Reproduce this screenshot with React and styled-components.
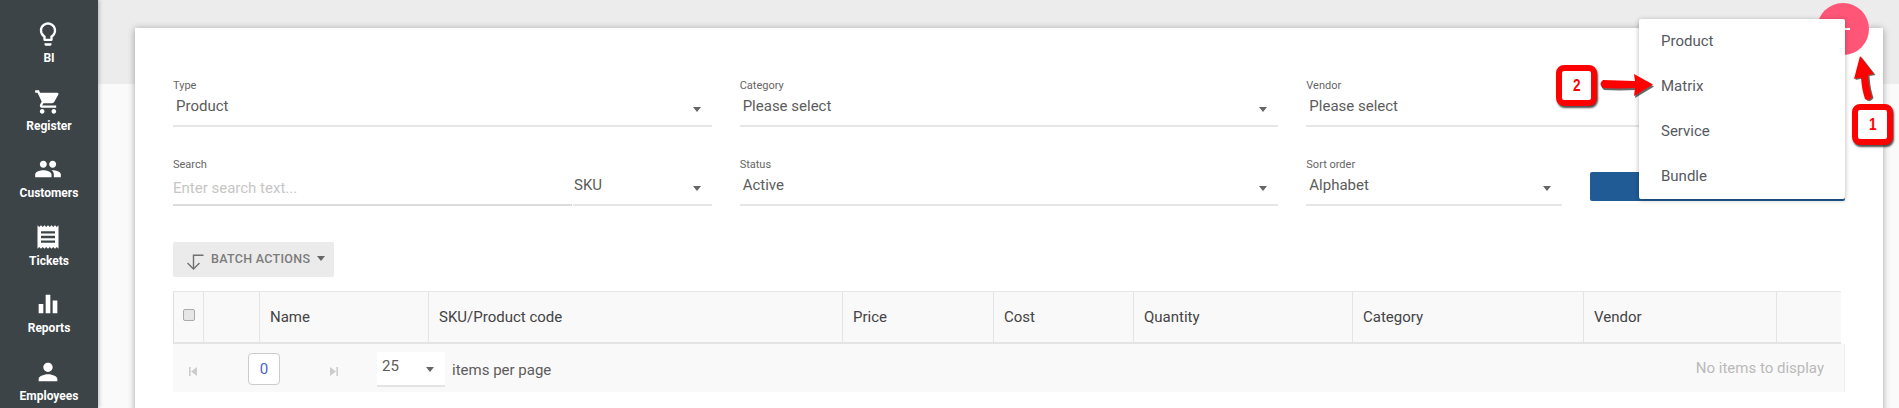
import React from 'react'
import styled, { createGlobalStyle } from 'styled-components'
import { MdOutlineLightbulb, MdShoppingCart, MdPeople, MdReceipt, MdEqualizer, MdPerson } from 'react-icons/md'

const navItems = [
  { label: 'BI', Icon: MdOutlineLightbulb },
  { label: 'Register', Icon: MdShoppingCart },
  { label: 'Customers', Icon: MdPeople },
  { label: 'Tickets', Icon: MdReceipt },
  { label: 'Reports', Icon: MdEqualizer },
  { label: 'Employees', Icon: MdPerson },
]

const columns = [
  { width: 30 },
  { width: 56 },
  { width: 169, label: 'Name' },
  { width: 414, label: 'SKU/Product code' },
  { width: 151, label: 'Price' },
  { width: 140, label: 'Cost' },
  { width: 219, label: 'Quantity' },
  { width: 231, label: 'Category' },
  { width: 193, label: 'Vendor' },
  { width: 65 },
]

const arrowTwoPath = 'M4 7C14 7 24 8 36 8L35 1L54 11.5L35 23L36 15C25 15.5 14 15.5 4 15Q-1 11 4 7Z'
const arrowOnePath = 'M19 42C17 36 15.5 29 15 20L21 19L7 1L1 24L8 22.5C8.5 31 10 38 12 44Q16 47 19 42Z'

function Field({ label, value }) {
  return (
    <FieldBox>
      <FieldLabel>{label}</FieldLabel>
      <FieldLine>
        <FieldValue>{value}</FieldValue>
        <Caret />
      </FieldLine>
    </FieldBox>
  )
}

function App() {
  return (
    <>
      <GlobalStyle />
      <Page>
        <Sidebar>
          {navItems.map(({ label, Icon }) => (
            <NavItem key={label}>
              <Icon size={28} />
              <NavLabel>{label}</NavLabel>
            </NavItem>
          ))}
        </Sidebar>
        <Main>
          <Card>
            <FilterGrid>
              <Field label="Type" value="Product" />
              <Field label="Category" value="Please select" />
              <Field label="Vendor" value="Please select" />
              <FieldBox>
                <FieldLabel>Search</FieldLabel>
                <SearchRow>
                  <SearchInput>Enter search text...</SearchInput>
                  <SkuSelect>
                    <SkuText>SKU</SkuText>
                    <Caret />
                  </SkuSelect>
                </SearchRow>
              </FieldBox>
              <Field label="Status" value="Active" />
              <SplitCell>
                <Field label="Sort order" value="Alphabet" />
                <SearchButton />
              </SplitCell>
            </FilterGrid>

            <BatchButton>
              <svg width="18" height="16" viewBox="0 0 18 16" fill="none" stroke="#6f6f6f" strokeWidth="1.4">
                <path d="M17.5 1.2H7.5V14" />
                <path d="M1.5 9L7.5 15L13.5 9" />
              </svg>
              <BatchText>BATCH ACTIONS</BatchText>
              <BatchCaret />
            </BatchButton>

            <TableHead>
              {columns.map((col, i) => (
                <HeadCell key={i} $width={col.width}>
                  {i === 0 ? <CheckBox /> : col.label}
                </HeadCell>
              ))}
            </TableHead>
            <TableFooter>
              <PagerIcon>
                <svg width="8" height="9" viewBox="0 0 8 9" fill="#ccc"><path d="M0 0h1.6v9H0zM8 0v9L2 4.5z" /></svg>
              </PagerIcon>
              <PageBox>0</PageBox>
              <PagerIcon>
                <svg width="8" height="9" viewBox="0 0 8 9" fill="#ccc"><path d="M6.4 0H8v9H6.4zM0 0v9l6-4.5z" /></svg>
              </PagerIcon>
              <PageSize>
                <span>25</span>
                <Caret />
              </PageSize>
              <PerPage>items per page</PerPage>
              <NoItems>No items to display</NoItems>
            </TableFooter>
          </Card>
        </Main>

        <Fab><FabPlus /></Fab>
        <Menu>
          <MenuItem>Product</MenuItem>
          <MenuItem>Matrix</MenuItem>
          <MenuItem>Service</MenuItem>
          <MenuItem>Bundle</MenuItem>
        </Menu>

        <Badge $left={1556} $top={65}><BadgeDigit>2</BadgeDigit></Badge>
        <Badge $left={1852} $top={104}><BadgeDigit>1</BadgeDigit></Badge>
        <ArrowTwo viewBox="0 0 58 26" width="58" height="26">
          <path d={arrowTwoPath} fill="#000" opacity=".6" transform="translate(1 2)" />
          <path d={arrowTwoPath} fill="#f00" />
        </ArrowTwo>
        <ArrowOne viewBox="0 0 24 48" width="24" height="48">
          <path d={arrowOnePath} fill="#000" opacity=".6" transform="translate(1.5 1)" />
          <path d={arrowOnePath} fill="#f00" />
        </ArrowOne>
      </Page>
    </>
  )
}

export default App

const GlobalStyle = createGlobalStyle`
    html, body {
        margin: 0;
        height: 100%;
        overflow: hidden;
        background: #fafafa;
    }
    body {
        font-family: Roboto, "Liberation Sans", sans-serif;
    }
    #root {
        height: 100%;
    }
`;
const Page = styled.div`
    position: relative;
    display: flex;
    width: 1899px;
    height: 408px;
    overflow: hidden;
`;
const Sidebar = styled.nav`
    flex: 0 0 98px;
    box-sizing: border-box;
    padding-top: 20px;
    background: #3c4448;
    box-shadow: 1px 0 4px rgba(0, 0, 0, 0.25);
    color: #fff;
    z-index: 1;
`;
const NavItem = styled.div`
    display: flex;
    flex-direction: column;
    align-items: center;
    height: 67.5px;
    svg {
        margin-left: -2px;
    }
`;
const NavLabel = styled.div`
    margin-top: 2px;
    font-size: 12px;
    font-weight: 700;
    line-height: 16px;
`;
const Main = styled.main`
    flex: 1;
    box-sizing: border-box;
    padding: 28px 16px 0 37px;
    background: linear-gradient(#ececec 84px, #fafafa 84px);
`;
const Card = styled.section`
    box-sizing: border-box;
    height: 420px;
    padding: 52px 38px 0;
    background: #fff;
    box-shadow: 0 1px 7px rgba(0, 0, 0, 0.35);
`;
const FilterGrid = styled.div`
    display: grid;
    grid-template-columns: repeat(3, 1fr);
    column-gap: 28px;
    row-gap: 32px;
`;
const SplitCell = styled.div`
    display: grid;
    grid-template-columns: repeat(2, 1fr);
    column-gap: 28px;
`;
const FieldBox = styled.div`
    display: flex;
    flex-direction: column;
    height: 47px;
`;
const FieldLabel = styled.label`
    height: 14px;
    font-size: 11px;
    line-height: 12px;
    color: #666;
`;
const FieldLine = styled.div`
    flex: 1;
    display: flex;
    align-items: center;
    justify-content: space-between;
    padding: 0 11px 7px 3px;
    border-bottom: 2px solid #e6e6e6;
`;
const FieldValue = styled.span`
    font-size: 15px;
    color: #5c5c5c;
`;
const Caret = styled.i`
    display: block;
    flex: none;
    margin-top: 7px;
    width: 0;
    height: 0;
    border-left: 4.5px solid transparent;
    border-right: 4.5px solid transparent;
    border-top: 5px solid #666;
`;
const BatchCaret = styled(Caret)`
    margin: -6px 0 0 -1px;
`;
const SearchRow = styled.div`
    flex: 1;
    display: flex;
`;
const SearchInput = styled.div`
    flex: 0 0 399px;
    display: flex;
    align-items: center;
    padding-bottom: 2px;
    box-sizing: border-box;
    font-size: 15px;
    color: #c6c6c6;
    border-bottom: 2px solid #dcdcdc;
`;
const SkuSelect = styled.div`
    flex: 1;
    display: flex;
    align-items: center;
    justify-content: space-between;
    margin-left: 1px;
    padding: 0 11px 7px 1px;
    border-bottom: 2px solid #e6e6e6;
`;
const SkuText = styled.span`
    font-size: 15px;
    color: #5c5c5c;
`;
const SearchButton = styled.div`
    align-self: end;
    height: 29px;
    margin-bottom: 5px;
    border-radius: 2px;
    background: #205b96;
`;
const BatchButton = styled.button`
    display: flex;
    align-items: center;
    box-sizing: border-box;
    width: 161px;
    height: 35px;
    margin-top: 36px;
    padding: 4px 0 0 13px;
    border: 0;
    border-radius: 2px;
    background: #ebebeb;
    font-family: inherit;
`;
const BatchText = styled.span`
    margin: -6px 8px 0 7px;
    font-size: 12.5px;
    font-weight: 500;
    letter-spacing: 0.3px;
    color: #7c7c7c;
`;
const TableHead = styled.div`
    display: flex;
    box-sizing: border-box;
    width: 1668px;
    height: 53px;
    margin-top: 14px;
    border-top: 1px solid #e6e6e6;
    border-left: 1px solid #e0e0e0;
    border-bottom: 2px solid #e4e4e4;
    background: #f9f9f9;
`;
const HeadCell = styled.div`
    flex: 0 0 ${p => p.$width}px;
    display: flex;
    align-items: center;
    box-sizing: border-box;
    padding-left: 10px;
    border-right: 1px solid #e4e4e4;
    font-size: 15px;
    color: #444;
    &:last-child {
        flex: 1;
        border-right: 0;
    }
`;
const CheckBox = styled.i`
    display: block;
    margin: -4px 0 0 -1px;
    width: 10px;
    height: 10px;
    border: 1px solid #aaa;
    border-radius: 2px;
    background: #e6e6e6;
`;
const TableFooter = styled.div`
    display: flex;
    align-items: center;
    box-sizing: border-box;
    width: 1672px;
    height: 48px;
    border-right: 1px solid #eee;
    background: #f9f9f9;
`;
const PagerIcon = styled.span`
    display: flex;
    margin-top: 6px;
    &:first-child {
        margin-left: 16px;
    }
`;
const PageBox = styled.div`
    box-sizing: border-box;
    width: 32px;
    height: 32px;
    margin: 1px 50px 0 51px;
    border: 1px solid #ccc;
    border-radius: 4px;
    background: #fff;
    font-size: 15px;
    line-height: 30px;
    text-align: center;
    color: #4a62c4;
`;
const PageSize = styled.div`
    display: flex;
    align-items: center;
    justify-content: space-between;
    box-sizing: border-box;
    width: 68px;
    height: 35px;
    margin: 3px 7px 0 39px;
    padding: 0 11px 5px 5px;
    border-bottom: 2px solid #e4e4e4;
    background: #fff;
    font-size: 15px;
    color: #5c5c5c;
`;
const PerPage = styled.span`
    margin-top: 4px;
    font-size: 15px;
    color: #5c5c5c;
`;
const NoItems = styled.span`
    margin-left: auto;
    padding-right: 20px;
    font-size: 15px;
    color: #b9b9b9;
`;
const Fab = styled.div`
    position: absolute;
    left: 1817px;
    top: 3px;
    width: 52px;
    height: 52px;
    border-radius: 50%;
    background: #ff5577;
`;
const FabPlus = styled.i`
    position: absolute;
    left: 28px;
    top: 25px;
    width: 5px;
    height: 2px;
    background: #fff;
`;
const Menu = styled.ul`
    position: absolute;
    left: 1639px;
    top: 19px;
    box-sizing: border-box;
    width: 206px;
    height: 180px;
    margin: 0;
    padding: 0;
    list-style: none;
    border-radius: 2px;
    background: #fff;
    box-shadow: 0 1px 5px rgba(0, 0, 0, 0.3);
`;
const MenuItem = styled.li`
    height: 45px;
    padding-left: 22px;
    font-size: 15px;
    line-height: 45px;
    color: #555a60;
`;
const Badge = styled.div`
    position: absolute;
    left: ${p => p.$left}px;
    top: ${p => p.$top}px;
    box-sizing: border-box;
    display: flex;
    align-items: center;
    justify-content: center;
    width: 41px;
    height: 41px;
    border: 6px solid #f00;
    border-radius: 8px;
    background: #fff;
    box-shadow: 1px 2px 2px rgba(0, 0, 0, 0.7);
`;
const BadgeDigit = styled.span`
    font-family: "Liberation Sans", sans-serif;
    font-size: 17px;
    font-weight: 700;
    color: #f00;
    transform: scaleX(0.8);
`;
const ArrowTwo = styled.svg`
    position: absolute;
    left: 1599px;
    top: 73px;
`;
const ArrowOne = styled.svg`
    position: absolute;
    left: 1853px;
    top: 55px;
`;
